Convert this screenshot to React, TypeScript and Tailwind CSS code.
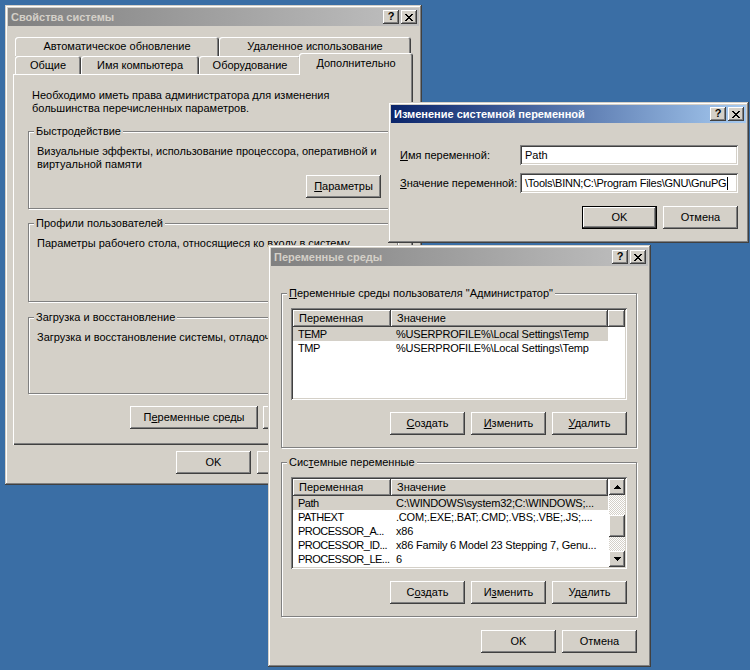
import React from "react";

// classic 3D bevels
const raised = "shadow-[inset_-1px_-1px_#404040,inset_1px_1px_#fff,inset_-2px_-2px_#808080]";
const sunken = "shadow-[inset_1px_1px_#808080,inset_-1px_-1px_#fff,inset_2px_2px_#404040,inset_-2px_-2px_#d4d0c8]";
const frame = "shadow-[inset_-1px_-1px_#404040,inset_1px_1px_#d4d0c8,inset_-2px_-2px_#808080,inset_2px_2px_#fff]";
const tabBevel = "shadow-[inset_1px_1px_#fff,inset_-1px_0_#404040,inset_-2px_0_#808080]";

function CloseGlyph() {
  return (
    <svg width="8" height="7" viewBox="0 0 8 7" shapeRendering="crispEdges">
      <path
        fill="#000"
        d="M0 0h2v1H0z M6 0h2v1H6z M1 1h2v1H1z M5 1h2v1H5z M2 2h4v1H2z M3 3h2v1H3z M2 4h4v1H2z M1 5h2v1H1z M5 5h2v1H5z M0 6h2v1H0z M6 6h2v1H6z"
      />
    </svg>
  );
}

function Arrow({ down }: { down?: boolean }) {
  return (
    <svg width="7" height="4" viewBox="0 0 7 4" shapeRendering="crispEdges">
      <path
        fill="#000"
        d={down ? "M0 0h7v1H0z M1 1h5v1H1z M2 2h3v1H2z M3 3h1v1H3z" : "M3 0h1v1H3z M2 1h3v1H2z M1 2h5v1H1z M0 3h7v1H0z"}
      />
    </svg>
  );
}

function TitleBar({ title, active }: { title: string; active?: boolean }) {
  return (
    <div
      className={`flex h-[18px] shrink-0 items-center pl-[3px] pr-[2px] ${
        active
          ? "bg-[linear-gradient(to_right,#0a246a,#a6caf0)] text-white"
          : "bg-[linear-gradient(to_right,#808080,#c0c0c0)] text-[#d4d0c8]"
      }`}
    >
      <span className="flex-1 font-bold">{title}</span>
      <div className={`flex h-[14px] w-[16px] items-center justify-center bg-[#d4d0c8] pb-[1px] font-bold text-black ${raised}`}>?</div>
      <div className={`ml-[2px] flex h-[14px] w-[16px] items-center justify-center bg-[#d4d0c8] ${raised}`}>
        <CloseGlyph />
      </div>
    </div>
  );
}

function Btn({ children, w = "w-[75px]", def }: { children: React.ReactNode; w?: string; def?: boolean }) {
  return (
    <div
      className={`flex h-[23px] shrink-0 items-center justify-center bg-[#d4d0c8] ${w} ${
        def ? "border border-black shadow-[inset_-1px_-1px_#404040,inset_1px_1px_#fff,inset_-2px_-2px_#808080]" : raised
      }`}
    >
      <span>{children}</span>
    </div>
  );
}

function Group({ legend, className, children }: { legend: React.ReactNode; className?: string; children?: React.ReactNode }) {
  return (
    <div className={`relative border border-[#808080] shadow-[inset_1px_1px_#fff,1px_1px_#fff] ${className ?? ""}`}>
      <span className="absolute left-[5px] top-[-7px] whitespace-nowrap bg-[#d4d0c8] px-[2px] leading-[13px]">{legend}</span>
      {children}
    </div>
  );
}

function Tab({ children, w }: { children: React.ReactNode; w: string }) {
  return (
    <div className={`flex h-full items-center justify-center rounded-t-[3px] bg-[#d4d0c8] ${w} ${tabBevel}`}>
      {children}
    </div>
  );
}

type Row = { name: string; value: string; selected?: boolean };

function ListView({ rows, scroll }: { rows: Row[]; scroll?: boolean }) {
  return (
    <div className={`flex h-[92px] bg-white p-[2px] ${sunken}`}>
      <div className="flex min-w-0 flex-1 flex-col overflow-hidden">
        <div className="flex h-[17px] shrink-0">
          <div className={`flex w-[98px] items-center bg-[#d4d0c8] pl-[6px] ${raised}`}>Переменная</div>
          <div className={`flex w-[217px] items-center bg-[#d4d0c8] pl-[6px] ${raised}`}>Значение</div>
          {!scroll && <div className={`flex-1 bg-[#d4d0c8] ${raised}`} />}
        </div>
        {rows.map((r) => (
          <div key={r.name} className={`flex h-[14px] w-[315px] shrink-0 items-center ${r.selected ? "bg-[#d4d0c8]" : ""}`}>
            <span className="w-[98px] overflow-hidden whitespace-nowrap pl-[5px] tracking-[-0.5px]">{r.name}</span>
            <span className="w-[217px] overflow-hidden whitespace-nowrap pl-[5px] tracking-[-0.2px]">{r.value}</span>
          </div>
        ))}
      </div>
      {scroll && (
        <div className="flex w-[16px] flex-col">
          <div className={`flex h-[16px] shrink-0 items-center justify-center bg-[#d4d0c8] ${raised}`}>
            <Arrow />
          </div>
          <div className="h-[20px] bg-[image:repeating-conic-gradient(#fff_0_25%,#d4d0c8_0_50%)] bg-[length:2px_2px]" />
          <div className={`h-[22px] shrink-0 bg-[#d4d0c8] ${raised}`} />
          <div className="flex-1 bg-[image:repeating-conic-gradient(#fff_0_25%,#d4d0c8_0_50%)] bg-[length:2px_2px]" />
          <div className={`flex h-[16px] shrink-0 items-center justify-center bg-[#d4d0c8] ${raised}`}>
            <Arrow down />
          </div>
        </div>
      )}
    </div>
  );
}

export default function App() {
  return (
    <div className="relative h-[670px] w-[750px] overflow-hidden bg-[#3a6ea5] font-['Liberation_Sans',Arial,sans-serif] text-[11px] leading-[13px] text-black">
      {/* Свойства системы */}
      <div className={`absolute left-[5px] top-[5px] flex h-[480px] w-[417px] flex-col bg-[#d4d0c8] p-[3px] ${frame}`}>
        <TitleBar title="Свойства системы" />
        <div className="px-[5px] pt-[11px]">
          <div className="ml-[2px] flex h-[19px] w-[396px]">
            <Tab w="w-[204px]">Автоматическое обновление</Tab>
            <Tab w="w-[192px]">Удаленное использование</Tab>
          </div>
          <div className="ml-[2px] flex h-[18px] w-[396px] items-start">
            <Tab w="w-[66px]">Общие</Tab>
            <Tab w="w-[118px]">Имя компьютера</Tab>
            <Tab w="w-[102px]">Оборудование</Tab>
            <div
              className={`relative z-10 -mb-[1px] -ml-[2px] -mr-[2px] -mt-[3px] flex h-[22px] w-[114px] justify-center rounded-t-[3px] bg-[#d4d0c8] pt-[4px] ${tabBevel}`}
            >
              Дополнительно
            </div>
          </div>
          <div className="h-[371px] w-[400px] px-[15px] pt-[15px] shadow-[inset_1px_1px_#fff,inset_-1px_-1px_#404040,inset_-2px_-2px_#808080]">
            <p className="ml-[4px]">
              Необходимо иметь права администратора для изменения
              <br />
              большинства перечисленных параметров.
            </p>
            <Group legend="Быстродействие" className="mt-[16px] h-[78px]">
              <div className="pl-[8px] pt-[13px]">
                Визуальные эффекты, использование процессора, оперативной и
                <br />
                виртуальной памяти
              </div>
              <div className="mt-[4px] flex justify-end pr-[16px]">
                <Btn>
                  <u>П</u>араметры
                </Btn>
              </div>
            </Group>
            <Group legend="Профили пользователей" className="mt-[14px] h-[79px]">
              <div className="pl-[8px] pt-[13px]">Параметры рабочего стола, относящиеся ко входу в систему</div>
              <div className="mt-[17px] flex justify-end pr-[16px]">
                <Btn>
                  П<u>а</u>раметры
                </Btn>
              </div>
            </Group>
            <Group legend="Загрузка и восстановление" className="mt-[15px] h-[77px]">
              <div className="pl-[8px] pt-[13px]">Загрузка и восстановление системы, отладочная информация</div>
              <div className="mt-[17px] flex justify-end pr-[16px]">
                <Btn>
                  Па<u>р</u>аметры
                </Btn>
              </div>
            </Group>
            <div className="mt-[12px] flex justify-end gap-[5px] pr-[7px]">
              <Btn w="w-[128px]">
                П<u>е</u>ременные среды
              </Btn>
              <Btn w="w-[128px]">
                <u>О</u>тчет об ошибках
              </Btn>
            </div>
          </div>
          <div className="mt-[6px] flex w-[400px] justify-end gap-[6px]">
            <Btn>OK</Btn>
            <Btn>Отмена</Btn>
            <Btn>
              <span className="text-[#808080]">Применить</span>
            </Btn>
          </div>
        </div>
      </div>

      {/* Изменение системной переменной */}
      <div className={`absolute left-[388px] top-[102px] z-20 flex h-[141px] w-[361px] flex-col bg-[#d4d0c8] p-[3px] ${frame}`}>
        <TitleBar title="Изменение системной переменной" active />
        <div className="pl-[9px] pr-[8px] pt-[22px]">
          <div className="flex items-center">
            <span className="w-[120px]">
              <u>И</u>мя переменной:
            </span>
            <div className={`flex h-[20px] flex-1 items-center bg-white pl-[5px] ${sunken}`}>Path</div>
          </div>
          <div className="mt-[8px] flex items-center">
            <span className="w-[120px]">
              <u>З</u>начение переменной:
            </span>
            <div className={`flex h-[20px] flex-1 items-center overflow-hidden whitespace-nowrap bg-white pl-[5px] tracking-[-0.25px] ${sunken}`}>
              \Tools\BINN;C:\Program Files\GNU\GnuPG
              <span className="ml-[1px] h-[13px] w-[1px] shrink-0 bg-black" />
            </div>
          </div>
          <div className="mt-[13px] flex justify-end gap-[6px]">
            <Btn def>OK</Btn>
            <Btn>Отмена</Btn>
          </div>
        </div>
      </div>

      {/* Переменные среды */}
      <div className={`absolute left-[268px] top-[245px] z-10 flex h-[422px] w-[383px] flex-col bg-[#d4d0c8] p-[3px] ${frame}`}>
        <TitleBar title="Переменные среды" />
        <div className="pl-[10px] pr-[11px] pt-[27px]">
          <Group
            legend={
              <>
                <u>П</u>еременные среды пользователя "Администратор"
              </>
            }
            className="h-[155px]"
          >
            <div className="px-[9px] pt-[14px]">
              <ListView
                rows={[
                  { name: "TEMP", value: "%USERPROFILE%\\Local Settings\\Temp", selected: true },
                  { name: "TMP", value: "%USERPROFILE%\\Local Settings\\Temp" },
                ]}
              />
              <div className="mt-[12px] flex justify-end gap-[6px]">
                <Btn>
                  <u>С</u>оздать
                </Btn>
                <Btn>
                  <u>И</u>зменить
                </Btn>
                <Btn>
                  <u>У</u>далить
                </Btn>
              </div>
            </div>
          </Group>
          <Group
            legend={
              <>
                Сис<u>т</u>емные переменные
              </>
            }
            className="mt-[14px] h-[155px]"
          >
            <div className="px-[9px] pt-[14px]">
              <ListView
                scroll
                rows={[
                  { name: "Path", value: "C:\\WINDOWS\\system32;C:\\WINDOWS;...", selected: true },
                  { name: "PATHEXT", value: ".COM;.EXE;.BAT;.CMD;.VBS;.VBE;.JS;...." },
                  { name: "PROCESSOR_A...", value: "x86" },
                  { name: "PROCESSOR_ID...", value: "x86 Family 6 Model 23 Stepping 7, Genu..." },
                  { name: "PROCESSOR_LE...", value: "6" },
                ]}
              />
              <div className="mt-[12px] flex justify-end gap-[6px]">
                <Btn>
                  С<u>о</u>здать
                </Btn>
                <Btn>
                  И<u>з</u>менить
                </Btn>
                <Btn>
                  Уд<u>а</u>лить
                </Btn>
              </div>
            </div>
          </Group>
          <div className="mt-[13px] flex justify-end gap-[6px]">
            <Btn>OK</Btn>
            <Btn>Отмена</Btn>
          </div>
        </div>
      </div>
    </div>
  );
}
